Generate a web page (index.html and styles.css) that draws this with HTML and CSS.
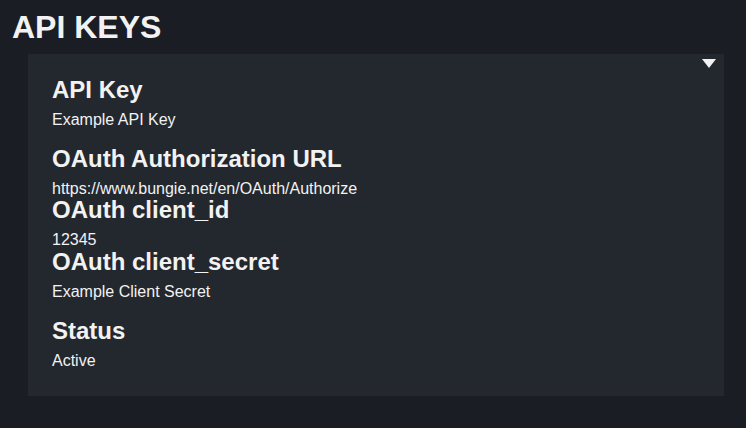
FILE: index.html
```html
<!DOCTYPE html>
<html lang="en">
<head>
  <meta charset="UTF-8">
  <meta name="viewport" content="width=device-width, initial-scale=1.0">
  <title>API Keys</title>
  <link rel="stylesheet" href="styles.css">
</head>
<body>
  <h1 class="page-title">API KEYS</h1>
  <div class="key-panel">
    <div class="toggle"></div>
    <h2 class="field-name">API Key</h2>
    <p class="field-value">Example API Key</p>
    <h2 class="field-name">OAuth Authorization URL</h2>
    <p class="field-value url">https://www.bungie.net/en/OAuth/Authorize</p>
    <h2 class="field-name">OAuth client_id</h2>
    <p class="field-value id">12345</p>
    <h2 class="field-name">OAuth client_secret</h2>
    <p class="field-value">Example Client Secret</p>
    <h2 class="field-name">Status</h2>
    <p class="field-value">Active</p>
  </div>
</body>
</html>
```

FILE: styles.css
```css
* {
  box-sizing: border-box;
}

body {
  margin: 0;
  background-color: #1a1d24;
  color: #f2f2f2;
  font-family: "Liberation Sans", Arial, sans-serif;
}

.page-title {
  font-size: 32px;
  font-weight: bold;
  margin: 0;
  padding: 9px 12px 8px;
}

.key-panel {
  position: relative;
  background: #23272e;
  margin: 0 22px 0 28px;
  padding: 22px 24px 10px;
}

.toggle {
  position: absolute;
  top: 5px;
  right: 8px;
  width: 0;
  height: 0;
  border-left: 7px solid transparent;
  border-right: 7px solid transparent;
  border-top: 9px solid #f2f2f2;
}

.field-name {
  font-size: 24px;
  font-weight: bold;
  margin: 0 0 7px;
}

.field-value {
  font-size: 16px;
  margin: 0 0 16px;
}

.field-value.url {
  margin-bottom: -2px;
}

.field-value.id {
  margin-bottom: -1px;
}
```
